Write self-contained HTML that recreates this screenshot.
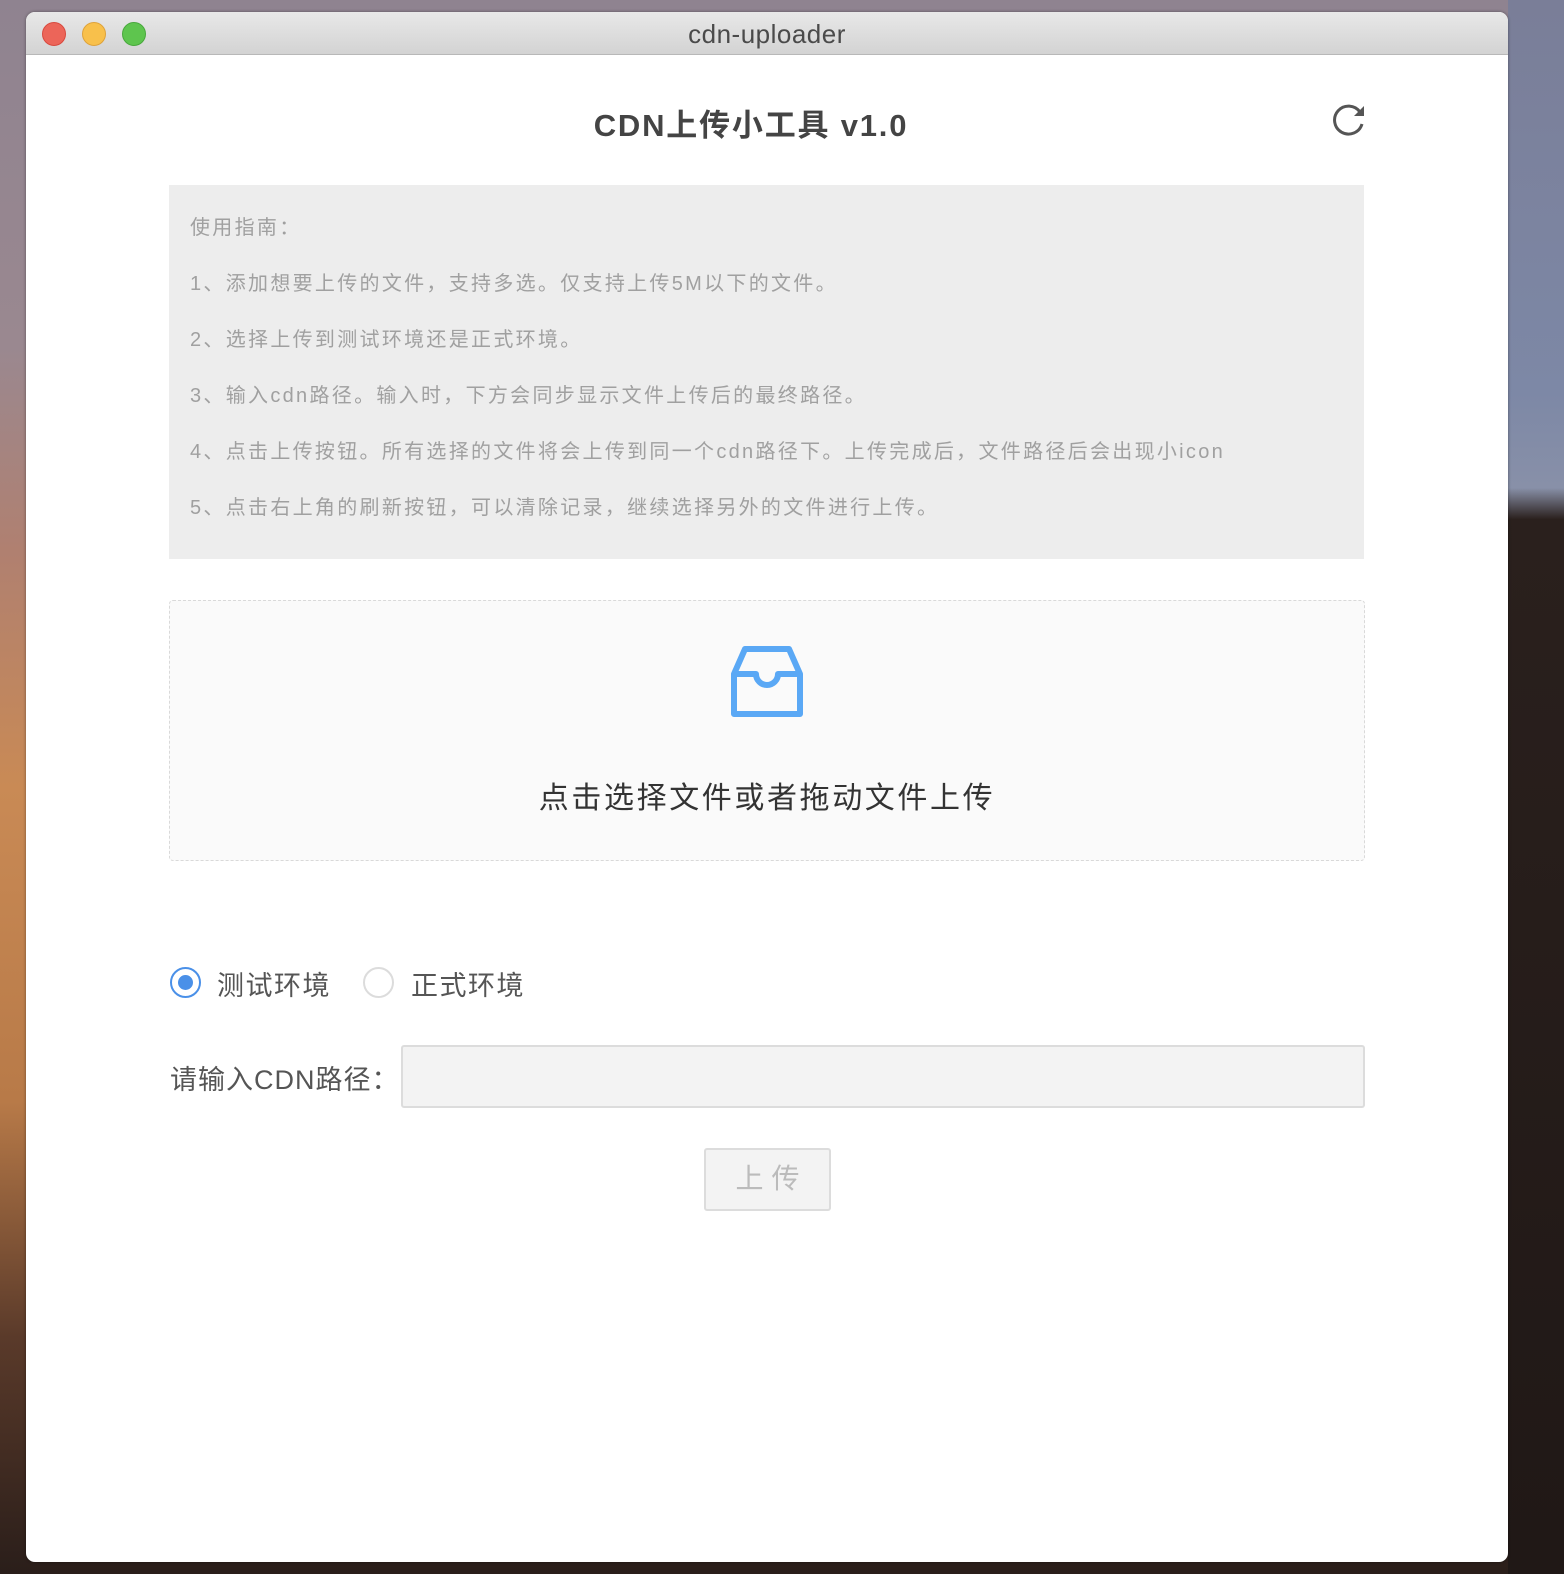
<!DOCTYPE html>
<html><head><meta charset="utf-8"><style>
*{margin:0;padding:0;box-sizing:border-box}
body{width:1564px;height:1574px;position:relative;overflow:hidden;font-family:"Liberation Sans","Noto Sans CJK SC",sans-serif;
background:linear-gradient(180deg,#8f8390 0%,#9a8890 22%,#b08070 35%,#c98a55 50%,#b87a48 70%,#5a3a2a 85%,#2a1e1a 100%)}
.rbg{position:absolute;left:1508px;top:0;width:56px;height:1574px;background:linear-gradient(180deg,#7a7e98 0%,#7d88a6 25%,#8890a8 31%,#2a201d 33%,#201816 100%)}
.win{position:absolute;left:26px;top:12px;width:1482px;height:1550px;background:#fff;border-radius:9px;overflow:hidden;box-shadow:0 0 3px rgba(0,0,0,.4)}
.tb{height:43px;background:linear-gradient(#e8e8e8,#d3d3d3);border-bottom:1px solid #b8b8b8;position:relative}
.dot{position:absolute;top:10px;width:24px;height:24px;border-radius:50%}
.tt{position:absolute;left:0;right:0;top:7px;text-align:center;font-size:26px;color:#4a4a4a;letter-spacing:0.5px}
.abs{position:absolute}
.g{position:absolute;left:169px;top:185px;width:1195px;height:374px;background:#ededed}
.g p{position:absolute;left:21px;font-size:20px;color:#a0a0a0;white-space:nowrap;letter-spacing:2.3px}
</style></head><body>
<div class="rbg"></div>
<div class="win">
 <div class="tb">
  <div class="dot" style="left:16px;background:#ec6559;border:1px solid #d8493e"></div>
  <div class="dot" style="left:56px;background:#f8c04b;border:1px solid #dea23a"></div>
  <div class="dot" style="left:96px;background:#5ec54e;border:1px solid #48a83c"></div>
  <div class="tt">cdn-uploader</div>
 </div>
</div>
<div class="abs" style="left:0;width:1502px;top:100px;text-align:center;font-size:31px;font-weight:bold;color:#444;letter-spacing:1.8px">CDN上传小工具 v1.0</div>
<svg class="abs" style="left:1332px;top:103px" width="34" height="34" viewBox="0 0 34 34"><path d="M28 9 A14 14 0 1 0 30 21" fill="none" stroke="#555" stroke-width="3"/><path d="M32 3 L32 13 L22 13 Z" fill="#555"/></svg>
<div class="g">
 <p style="top:26px">使用指南：</p>
 <p style="top:82px">1、添加想要上传的文件，支持多选。仅支持上传5M以下的文件。</p>
 <p style="top:138px">2、选择上传到测试环境还是正式环境。</p>
 <p style="top:194px">3、输入cdn路径。输入时，下方会同步显示文件上传后的最终路径。</p>
 <p style="top:250px">4、点击上传按钮。所有选择的文件将会上传到同一个cdn路径下。上传完成后，文件路径后会出现小icon</p>
 <p style="top:306px">5、点击右上角的刷新按钮，可以清除记录，继续选择另外的文件进行上传。</p>
</div>
<div class="abs" style="left:169px;top:600px;width:1196px;height:261px;background:#fafafa;border:1px dashed #d9d9d9;border-radius:4px"></div>
<svg class="abs" style="left:730px;top:644px" width="74" height="76" viewBox="0 0 74 76"><g fill="none" stroke="#5aa8f5" stroke-width="6" stroke-linejoin="round"><path d="M15 5 H59 L70 30 V70 H4 V30 Z"/><path d="M4 30 H26 A11 11 0 0 0 48 30 H70"/></g></svg>
<div class="abs" style="left:169px;width:1196px;top:773px;text-align:center;font-size:30px;color:#333;letter-spacing:2.6px">点击选择文件或者拖动文件上传</div>
<div class="abs" style="left:170px;top:967px;width:31px;height:31px;border-radius:50%;border:2px solid #4a90e8;"><div style="position:absolute;left:6px;top:6px;width:15px;height:15px;border-radius:50%;background:#4a90e8"></div></div>
<div class="abs" style="left:217px;top:964px;font-size:27px;color:#555;letter-spacing:1.5px">测试环境</div>
<div class="abs" style="left:363px;top:967px;width:31px;height:31px;border-radius:50%;border:2px solid #dcdcdc"></div>
<div class="abs" style="left:411px;top:964px;font-size:27px;color:#555;letter-spacing:1.5px">正式环境</div>
<div class="abs" style="left:170px;top:1058px;font-size:27px;color:#555;letter-spacing:1px">请输入CDN路径：</div>
<div class="abs" style="left:401px;top:1045px;width:964px;height:63px;background:#f3f3f3;border:2px solid #dcdcdc;border-radius:3px"></div>
<div class="abs" style="left:704px;top:1148px;width:127px;height:63px;background:#f3f3f3;border:2px solid #dcdcdc;border-radius:3px;text-align:center;line-height:58px;font-size:28px;color:#bbb;letter-spacing:8px;padding-left:8px">上传</div>
</body></html>
